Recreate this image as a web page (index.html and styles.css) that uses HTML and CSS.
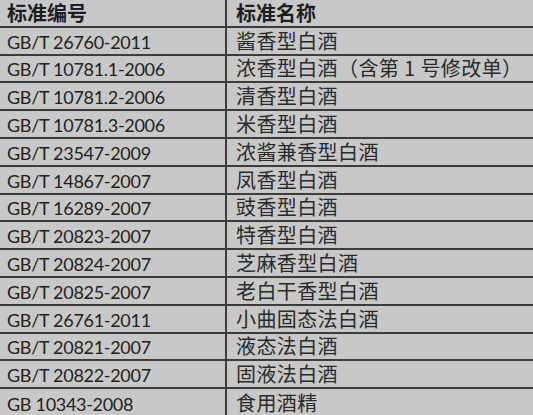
FILE: index.html
```html
<!DOCTYPE html>
<html lang="zh">
<head>
<meta charset="utf-8">
<link rel="stylesheet" href="styles.css">
</head>
<body>
<div class="sheet">
  <div class="cell code head">标准编号</div><div class="cell name head">标准名称</div>
  <div class="cell code">GB/T 26760-2011</div><div class="cell name">酱香型白酒</div>
  <div class="cell code">GB/T 10781.1-2006</div><div class="cell name">浓香型白酒（含第 1 号修改单）</div>
  <div class="cell code">GB/T 10781.2-2006</div><div class="cell name">清香型白酒</div>
  <div class="cell code">GB/T 10781.3-2006</div><div class="cell name">米香型白酒</div>
  <div class="cell code">GB/T 23547-2009</div><div class="cell name">浓酱兼香型白酒</div>
  <div class="cell code">GB/T 14867-2007</div><div class="cell name">凤香型白酒</div>
  <div class="cell code">GB/T 16289-2007</div><div class="cell name">豉香型白酒</div>
  <div class="cell code">GB/T 20823-2007</div><div class="cell name">特香型白酒</div>
  <div class="cell code">GB/T 20824-2007</div><div class="cell name">芝麻香型白酒</div>
  <div class="cell code">GB/T 20825-2007</div><div class="cell name">老白干香型白酒</div>
  <div class="cell code">GB/T 26761-2011</div><div class="cell name">小曲固态法白酒</div>
  <div class="cell code">GB/T 20821-2007</div><div class="cell name">液态法白酒</div>
  <div class="cell code">GB/T 20822-2007</div><div class="cell name">固液法白酒</div>
  <div class="cell code last">GB 10343-2008</div><div class="cell name last">食用酒精</div>
</div>
</body>
</html>
```
FILE: styles.css
```css
html, body {
  margin: 0;
  padding: 0;
  background: #c8c8c8;
}
.sheet {
  display: grid;
  grid-template-columns: 227px 1fr;
  grid-auto-rows: 27.8px;
  width: 533px;
  font-family: Lato, "Noto Sans CJK SC", sans-serif;
  font-size: 18px;
  line-height: 20px;
  color: #222;
}
.cell {
  box-sizing: border-box;
  border-bottom: 2px solid #3c3c3c;
  display: flex;
  align-items: center;
  white-space: nowrap;
}
.code {
  border-right: 2px solid #3c3c3c;
  padding-left: 7px;
  padding-top: 2px;
  letter-spacing: -0.3px;
}
.name {
  padding-left: 9px;
  font-family: "Noto Sans CJK SC", sans-serif;
  font-size: 20px;
  letter-spacing: 0.4px;
  color: #2a2a2a;
}
.head {
  font-family: "Noto Sans CJK SC", sans-serif;
  font-weight: 700;
  font-size: 20px;
  padding-top: 0;
  letter-spacing: 0;
  color: #1e1e1e;
}
.last {
  border-bottom: none;
}
```
